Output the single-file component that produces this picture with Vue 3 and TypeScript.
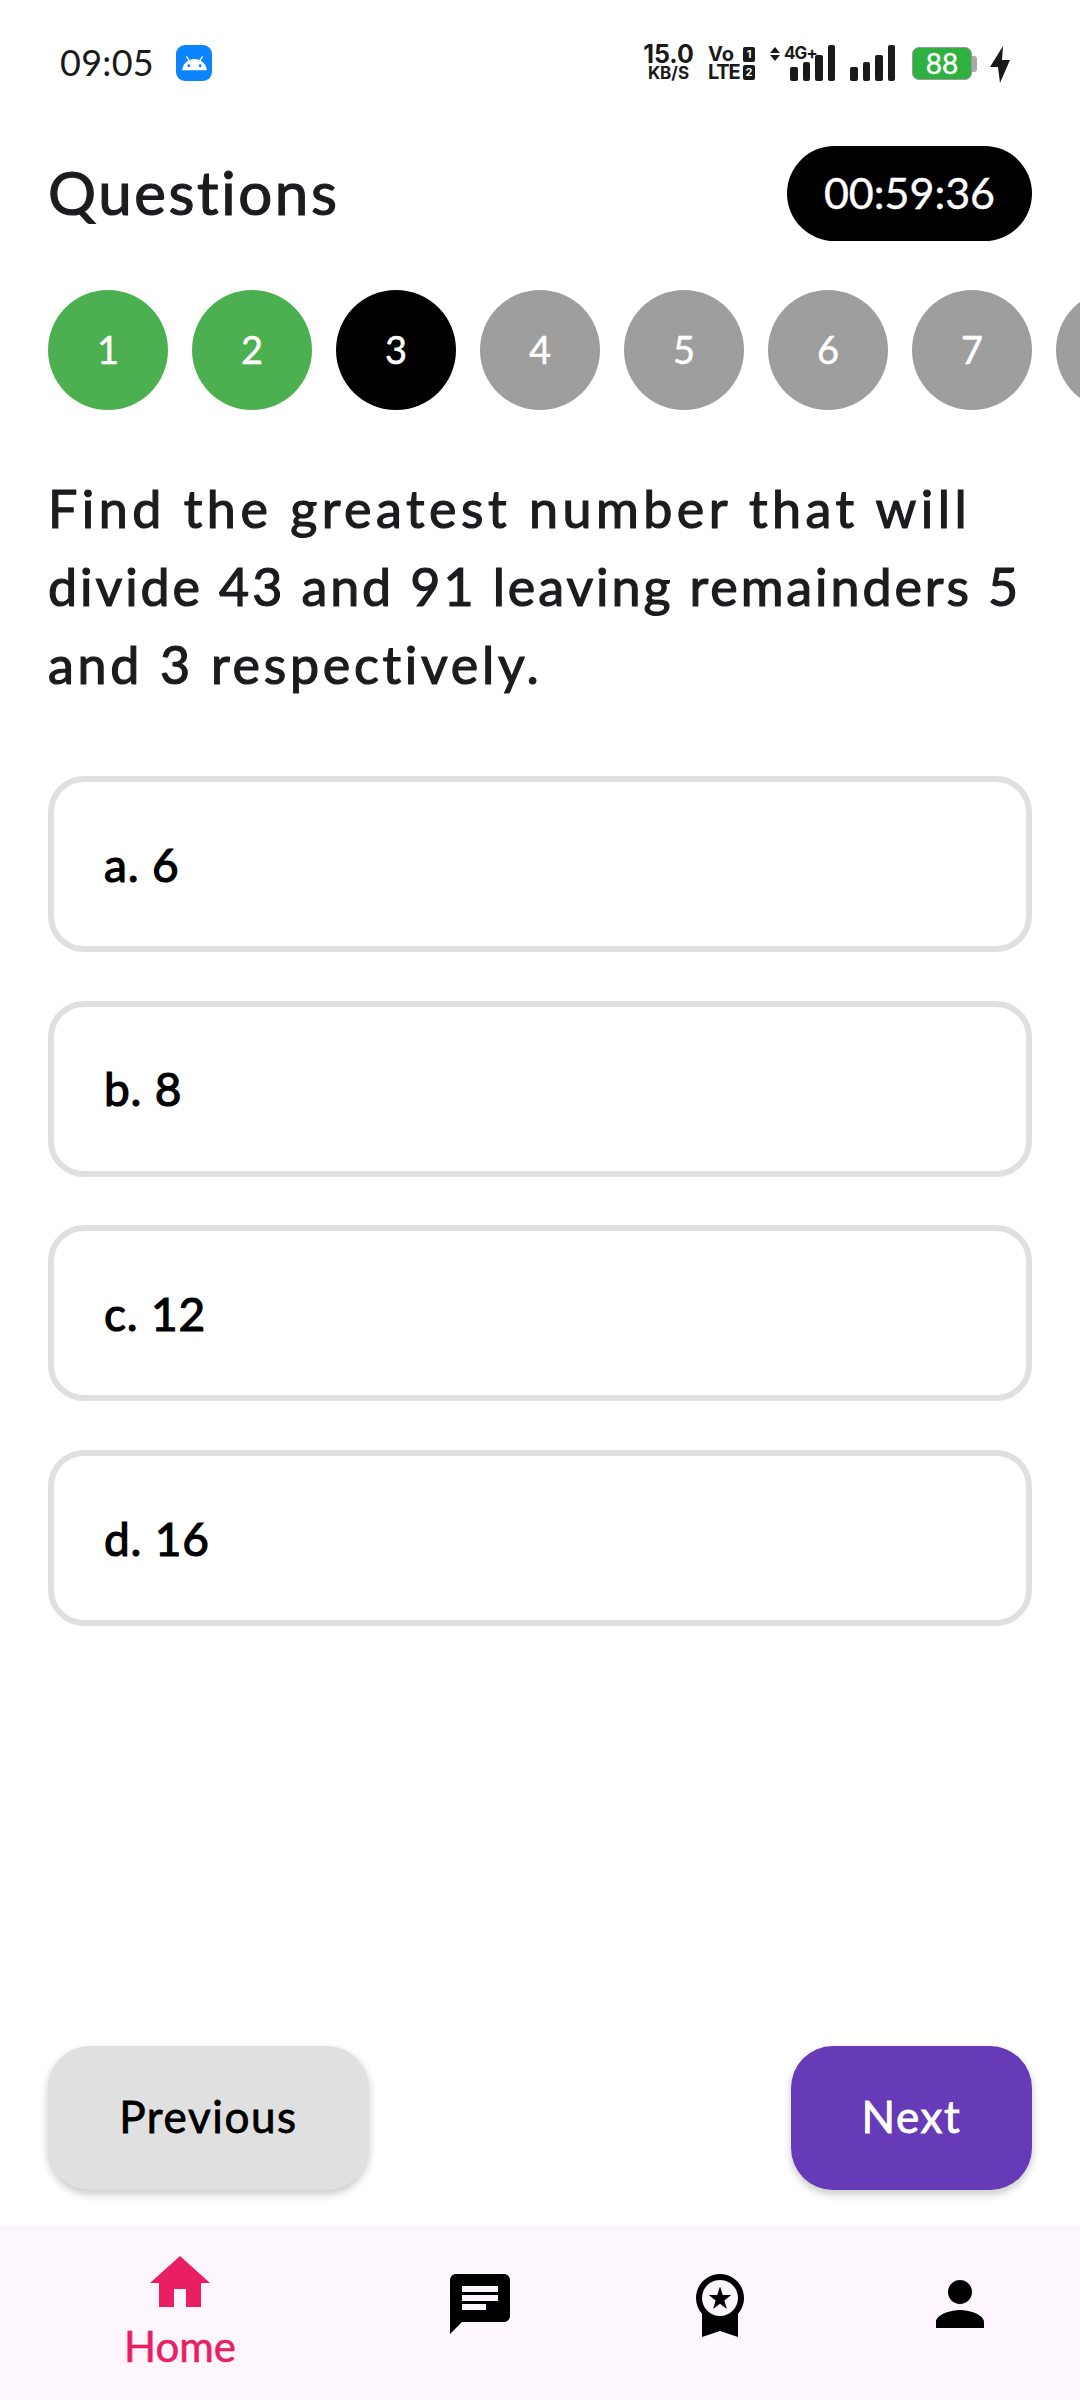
<script setup lang="ts">
import { ref } from 'vue'

interface Step {
  label: string
  state: 'done' | 'current' | 'todo'
}

// the eighth circle only peeks in at the edge, its number is off screen
const steps: Step[] = [1, 2, 3, 4, 5, 6, 7, 8].map((n) => ({
  label: n < 8 ? String(n) : '',
  state: n < 3 ? 'done' : n === 3 ? 'current' : 'todo',
}))

const questionLines = [
  'Find the greatest number that will',
  'divide 43 and 91 leaving remainders 5',
  'and 3 respectively.',
]
const options = ['a. 6', 'b. 8', 'c. 12', 'd. 16']
const selected = ref<string | null>(null)
const signalBars = [14, 19, 26, 36]
</script>

<template>
  <div class="screen">
    <header class="status">
      <div class="status-left">
        <span class="clock">09:05</span>
        <span class="app-badge">
          <svg viewBox="0 0 24 24" width="27" height="27">
            <path fill="#fff" d="M17.6 9.48l1.84-3.18c.16-.31.04-.69-.26-.85a.637.637 0 0 0-.83.22l-1.88 3.24a11.46 11.46 0 0 0-8.94 0L5.65 5.67a.643.643 0 0 0-.87-.2c-.28.18-.37.54-.22.83L6.4 9.48A10.78 10.78 0 0 0 1 18h22a10.78 10.78 0 0 0-5.4-8.52zM7 15.25a1.25 1.25 0 1 1 0-2.5 1.25 1.25 0 0 1 0 2.5zm10 0a1.25 1.25 0 1 1 0-2.5 1.25 1.25 0 0 1 0 2.5z" />
          </svg>
        </span>
      </div>
      <div class="status-right">
        <div class="speed">
          <span class="speed-num">15.0</span>
          <span class="speed-unit">KB/S</span>
        </div>
        <div class="volte">
          <div class="volte-row"><span>Vo</span><i class="sim">1</i></div>
          <div class="volte-row lte"><span>LTE</span><i class="sim">2</i></div>
        </div>
        <div class="net">
          <span class="arrows"><b class="up"></b><b class="down"></b></span>
          <span class="net-type">4G+</span>
          <div class="bars">
            <span v-for="h in signalBars" :key="h" class="bar" :style="{ height: h + 'px' }"></span>
          </div>
        </div>
        <div class="bars">
          <span v-for="h in signalBars" :key="h" class="bar" :style="{ height: h + 'px' }"></span>
        </div>
        <div class="battery">
          <span class="battery-body">88</span>
          <span class="battery-cap"></span>
        </div>
        <svg class="bolt" viewBox="0 0 20 37" width="20" height="37">
          <path fill="#1a1a1a" d="M13 0 0 21h8l2 16 10-23h-8z" />
        </svg>
      </div>
    </header>

    <main class="content">
      <div class="title-row">
        <h1 class="title">Questions</h1>
        <div class="timer">00:59:36</div>
      </div>

      <div class="steps">
        <div v-for="(s, i) in steps" :key="i" class="step" :class="s.state">{{ s.label }}</div>
      </div>

      <p class="question">
        <span v-for="(line, i) in questionLines" :key="i" class="q-line" :class="'q-line-' + i">{{ line }}</span>
      </p>

      <div class="options">
        <div
          v-for="o in options"
          :key="o"
          class="option"
          :class="{ picked: selected === o }"
          @click="selected = o"
        >
          {{ o }}
        </div>
      </div>

      <div class="actions">
        <button class="btn prev">Previous</button>
        <button class="btn next">Next</button>
      </div>
    </main>

    <nav class="tabs">
      <div class="tab active">
        <svg viewBox="0 0 24 24" width="72" height="72">
          <path fill="currentColor" d="M10 20v-6h4v6h5v-8h3L12 3 2 12h3v8z" />
        </svg>
        <span class="tab-label">Home</span>
      </div>
      <div class="tab">
        <svg viewBox="0 0 24 24" width="72" height="72">
          <path fill="currentColor" d="M20 2H4c-1.1 0-1.99.9-1.99 2L2 22l4-4h14c1.1 0 2-.9 2-2V4c0-1.1-.9-2-2-2zM6 9h12v2H6V9zm8 5H6v-2h8v2zm4-6H6V6h12v2z" />
        </svg>
      </div>
      <div class="tab">
        <svg viewBox="0 0 24 24" width="72" height="72">
          <path fill="currentColor" d="M9.68 13.69 12 11.93l2.31 1.76-.88-2.85L15.75 9h-2.84L12 6.19 11.09 9H8.25l2.31 1.84-.88 2.85zM20 10c0-4.42-3.58-8-8-8s-8 3.58-8 8c0 2.03.76 3.87 2 5.28V23l6-2 6 2v-7.72c1.24-1.41 2-3.25 2-5.28zm-8-6c3.31 0 6 2.69 6 6s-2.69 6-6 6-6-2.69-6-6 2.69-6 6-6z" />
        </svg>
      </div>
      <div class="tab">
        <svg viewBox="0 0 24 24" width="72" height="72">
          <path fill="currentColor" d="M12 12c2.21 0 4-1.79 4-4s-1.79-4-4-4-4 1.79-4 4 1.79 4 4 4zm0 2c-2.67 0-8 1.34-8 4v2h16v-2c0-2.66-5.33-4-8-4z" />
        </svg>
      </div>
    </nav>
  </div>
</template>

<style scoped>
.screen {
  width: 1080px;
  height: 2400px;
  display: flex;
  flex-direction: column;
  background: #fff;
  font-family: Lato, "Open Sans", sans-serif;
  overflow: hidden;
}

/* status bar */
.status {
  height: 125px;
  flex: none;
  display: flex;
  justify-content: space-between;
  align-items: flex-start;
  padding: 45px 70px 0 60px;
  box-sizing: border-box;
}
.status-left {
  display: flex;
  align-items: center;
  gap: 22px;
}
.clock {
  font-size: 36px;
  line-height: 34px;
  color: #1a1a1a;
  letter-spacing: 0.3px;
  padding-bottom: 2px;
}
.app-badge {
  width: 36px;
  height: 36px;
  border-radius: 9px;
  background: #0a84ff;
  display: flex;
  align-items: center;
  justify-content: center;
}
.status-right {
  display: flex;
  align-items: flex-end;
  font-family: Inter, sans-serif;
  color: #1a1a1a;
  height: 36px;
}
.speed {
  width: 53px;
  margin-right: 13px;
  display: flex;
  flex-direction: column;
  align-items: center;
  font-weight: 700;
}
.speed-num {
  font-size: 25px;
  line-height: 21px;
}
.speed-unit {
  font-size: 17px;
  line-height: 16px;
}
.volte {
  width: 47px;
  margin-right: 15px;
  font-weight: 700;
  font-size: 20px;
}
.volte-row {
  display: flex;
  justify-content: space-between;
  align-items: center;
  height: 18px;
}
.volte-row.lte {
  font-size: 20px;
  letter-spacing: -1.2px;
}
.sim {
  width: 12px;
  height: 15px;
  background: #1a1a1a;
  color: #fff;
  font-style: normal;
  font-size: 11px;
  line-height: 15px;
  letter-spacing: 0;
  text-align: center;
  border-radius: 2px;
}
.net {
  position: relative;
  margin-right: 15px;
  padding-left: 20px;
}
.arrows {
  position: absolute;
  left: 0;
  top: 2px;
  display: flex;
  flex-direction: column;
  gap: 2px;
}
.up,
.down {
  width: 0;
  height: 0;
  border-left: 5px solid transparent;
  border-right: 5px solid transparent;
}
.up {
  border-bottom: 6px solid #1a1a1a;
}
.down {
  border-top: 6px solid #1a1a1a;
}
.net-type {
  position: absolute;
  left: 14px;
  top: -2px;
  font-size: 17px;
  line-height: 20px;
  font-weight: 700;
  letter-spacing: -1px;
}
.bars {
  display: flex;
  align-items: flex-end;
  gap: 5px;
  height: 36px;
}
.bar {
  width: 7.5px;
  background: #1a1a1a;
  border-radius: 2px;
}
.battery {
  display: flex;
  align-items: center;
  margin-left: 17px;
  margin-right: 13px;
  margin-bottom: 1px;
}
.battery-body {
  width: 60px;
  height: 33px;
  box-sizing: border-box;
  background: #2eb13f;
  border: 1px solid #9a9a9a;
  border-radius: 7px;
  color: #fff;
  font-family: Lato, sans-serif;
  font-size: 28px;
  line-height: 31px;
  text-align: center;
  -webkit-text-stroke: 0.4px #fff;
}
.battery-cap {
  width: 5px;
  height: 16px;
  background: #a8a8a8;
  border-radius: 0 3px 3px 0;
}
.bolt {
  margin-bottom: -2px;
}

/* main */
.content {
  flex: 1;
  min-height: 0;
  display: flex;
  flex-direction: column;
}
.title-row {
  margin-top: 21px;
  padding: 0 48px;
  display: flex;
  justify-content: space-between;
  align-items: center;
}
.title {
  margin: 0;
  font-size: 60px;
  font-weight: 400;
  color: #1c1b1f;
  letter-spacing: 2.6px;
  -webkit-text-stroke: 1.2px #1c1b1f;
  position: relative;
  top: -2px;
}
.timer {
  width: 245px;
  height: 95px;
  border-radius: 48px;
  background: #000;
  color: #fff;
  font-size: 43px;
  padding-bottom: 3px;
  box-sizing: border-box;
  -webkit-text-stroke: 0.4px #fff;
  display: flex;
  align-items: center;
  justify-content: center;
}
.steps {
  margin-top: 49px;
  padding-left: 48px;
  display: flex;
  gap: 24px;
  overflow: hidden;
}
.step {
  width: 120px;
  height: 120px;
  flex: none;
  box-sizing: border-box;
  padding-bottom: 3px;
  border-radius: 50%;
  display: flex;
  align-items: center;
  justify-content: center;
  color: #fff;
  font-size: 38px;
  -webkit-text-stroke: 0.5px #fff;
}
.step.done {
  background: #4caf50;
}
.step.current {
  background: #000;
}
.step.todo {
  background: #9e9e9e;
}
.question {
  margin: 59px 48px 0;
  font-size: 52px;
  line-height: 78px;
  color: #1c1b1f;
  -webkit-text-stroke: 1.2px #1c1b1f;
}
.q-line {
  display: block;
  white-space: nowrap;
}
.q-line-0 {
  letter-spacing: 4.5px;
}
.q-line-1 {
  letter-spacing: 2.9px;
}
.q-line-2 {
  letter-spacing: 3.7px;
}
.options {
  margin-top: 73px;
  padding: 0 48px;
  display: flex;
  flex-direction: column;
  gap: 48.7px;
}
.option {
  height: 176px;
  box-sizing: border-box;
  border: 6px solid #e0e0e0;
  border-radius: 36px;
  padding-left: 50px;
  display: flex;
  align-items: center;
  font-size: 46px;
  color: #000;
  letter-spacing: 0.8px;
  -webkit-text-stroke: 1.2px #000;
}
.actions {
  margin-top: auto;
  margin-bottom: 35px;
  padding: 0 48px;
  display: flex;
  justify-content: space-between;
}
.btn {
  height: 144px;
  border: none;
  border-radius: 42px;
  padding-bottom: 6px;
  font-family: inherit;
  font-size: 44px;
  letter-spacing: 1.6px;
  -webkit-text-stroke: 0.8px currentColor;
  box-shadow: 0 4px 8px rgba(0, 0, 0, 0.22);
}
.prev {
  width: 321px;
  background: #e0e0e0;
  color: #000;
}
.next {
  width: 241px;
  background: #673ab7;
  color: #fff;
}

/* bottom nav */
.tabs {
  height: 175px;
  flex: none;
  display: flex;
  background: #fdf6fe;
}
.tab {
  flex: 1;
  display: flex;
  flex-direction: column;
  align-items: center;
  padding-top: 43px;
  color: #000;
}
.tab.active {
  flex: 1.5;
  padding-top: 22px;
  color: #e91e63;
}
.tab-label {
  font-size: 42px;
  line-height: 44px;
  margin-top: 5px;
  -webkit-text-stroke: 0.6px currentColor;
}
</style>
